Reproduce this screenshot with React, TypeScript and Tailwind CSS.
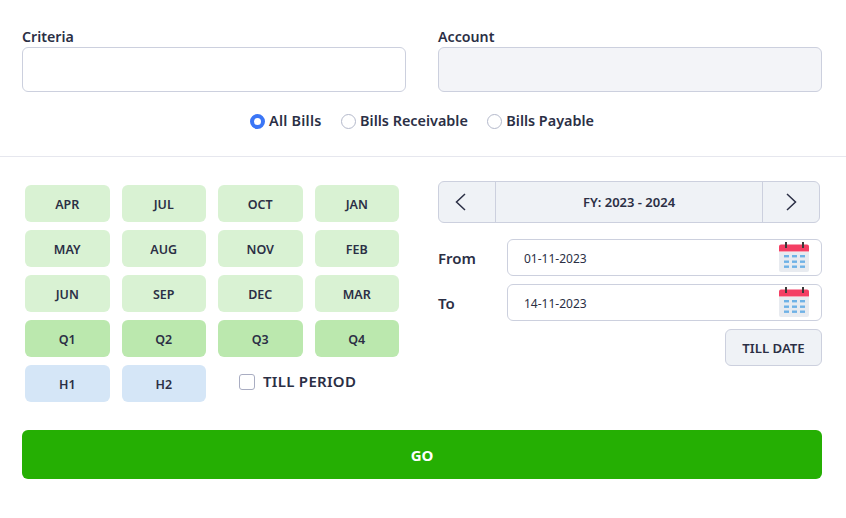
const font = { fontFamily: '"Noto Sans", "Open Sans", sans-serif' };

function Cal() {
  return (
    <svg width="30" height="31" viewBox="0 0 30 31" className="shrink-0">
      <path d="M0 8h30v20a2 2 0 0 1-2 2H2a2 2 0 0 1-2-2z" fill="#e8ebf0" />
      <path d="M0 4.5a2 2 0 0 1 2-2h26a2 2 0 0 1 2 2V9H0z" fill="#f43f64" />
      <rect x="0" y="9" width="30" height="1" fill="#f9a3b3" />
      <rect x="6" y="0" width="2" height="6" fill="#3a3a3a" />
      <rect x="23" y="0" width="2" height="6" fill="#3a3a3a" />
      {[13, 18.5, 23.5].map((y) =>
        [5, 13, 21].map((x) => <rect key={`${x}-${y}`} x={x} y={y} width="5" height="2.4" fill="#6fb2e6" />)
      )}
    </svg>
  );
}

function Radio({ label, on, w }: { label: string; on?: boolean; w: string }) {
  return (
    <label className="flex items-center gap-[4px]">
      {on ? (
        <span className="w-[15px] h-[15px] rounded-full border-[4px] border-[#3b76f6] bg-white" />
      ) : (
        <span className="w-[15px] h-[15px] rounded-full border border-[#b4b9cb] bg-white" />
      )}
      <span className={`${w} whitespace-nowrap text-[14.4px] font-semibold leading-[20px] text-[#2b2f45]`}>{label}</span>
    </label>
  );
}

function Cell({ t, c }: { t: string; c: string }) {
  return (
    <div className={`h-[37px] pt-[3px] rounded-[6px] flex items-center justify-center text-[12.5px] font-semibold text-[#2b2f45] ${c}`}>
      {t}
    </div>
  );
}

const L = 'bg-[#d9f2d3]';
const Q = 'bg-[#bbe8ae]';
const H = 'bg-[#d5e6f7]';

function DateRow({ label, value }: { label: string; value: string }) {
  return (
    <div className="flex items-center">
      <div className="w-[69px] pt-[1px] text-[15px] font-semibold text-[#2b2f45]">{label}</div>
      <div className="flex-1 h-[37px] border border-[#ccd0de] rounded-[6px] flex items-center justify-between pl-[16px] pr-[12px] bg-white">
        <span className="text-[12px] pt-[3px] text-[#2b2f45]">{value}</span>
        <Cal />
      </div>
    </div>
  );
}

export default function App() {
  return (
    <div style={font} className="w-[846px] h-[518px] bg-white overflow-hidden">
      <div className="flex gap-[32px] pl-[22px] pr-[24px] pt-[26px]">
        <div className="flex-1">
          <div className="text-[14.2px] font-semibold leading-[21px] text-[#2b2f45]">Criteria</div>
          <div className="h-[45px] border border-[#ccd0de] rounded-[6px] bg-white" />
        </div>
        <div className="flex-1">
          <div className="text-[14.2px] font-semibold leading-[21px] text-[#2b2f45]">Account</div>
          <div className="h-[45px] border border-[#ccd0de] rounded-[6px] bg-[#f3f4f8]" />
        </div>
      </div>
      <div className="flex gap-[19.5px] pl-[250px] mt-[19px]">
        <Radio label="All Bills" on w="tracking-[0.25px]" />
        <Radio label="Bills Receivable" w="tracking-normal" />
        <Radio label="Bills Payable" w="tracking-normal" />
      </div>
      <div className="h-px bg-[#e6e7ee] mt-[25px]" />
      <div className="flex pl-[22px] pr-[24px] pt-[24px]">
        <div className="w-[416px] pl-[3px] pr-[39px] pt-[4px]">
          <div className="grid grid-cols-4 gap-x-[12px] gap-y-[8px]">
            {['APR', 'JUL', 'OCT', 'JAN', 'MAY', 'AUG', 'NOV', 'FEB', 'JUN', 'SEP', 'DEC', 'MAR'].map((m) => (
              <Cell key={m} t={m} c={L} />
            ))}
            {['Q1', 'Q2', 'Q3', 'Q4'].map((m) => (
              <Cell key={m} t={m} c={Q} />
            ))}
            <Cell t="H1" c={H} />
            <Cell t="H2" c={H} />
            <label className="col-span-2 flex items-center gap-[8px] pl-[21px] pb-[4px]">
              <span className="w-[16px] h-[16px] rounded-[3px] border border-[#a9adc2] bg-white" />
              <span className="text-[15px] font-semibold tracking-[0.3px] text-[#2b2f45]">TILL PERIOD</span>
            </label>
          </div>
        </div>
        <div className="w-[384px]">
          <div className="flex h-[42px] w-[382px] border border-[#ccd0de] rounded-[6px] bg-[#eff2f6] text-[#2b2f45]">
            <div className="w-[57px] pr-[15px] flex items-center justify-center border-r border-[#ccd0de]">
              <svg width="12" height="20" viewBox="0 0 12 20" fill="none" stroke="currentColor" strokeWidth="1.5"><path d="M11 2 2.5 10 11 18" /></svg>
            </div>
            <div className="flex-1 pt-[2px] flex items-center justify-center text-[13px] font-semibold">FY: 2023 - 2024</div>
            <div className="w-[57px] pl-[1px] flex items-center justify-center border-l border-[#ccd0de]">
              <svg width="12" height="20" viewBox="0 0 12 20" fill="none" stroke="currentColor" strokeWidth="1.5"><path d="M1 2 9.5 10 1 18" /></svg>
            </div>
          </div>
          <div className="mt-[16px] flex flex-col gap-[8px]">
            <DateRow label="From" value="01-11-2023" />
            <DateRow label="To" value="14-11-2023" />
          </div>
          <div className="flex justify-end mt-[8px]">
            <div className="w-[97px] h-[37px] pt-[2px] border border-[#ccd0de] rounded-[6px] bg-[#eff2f6] flex items-center justify-center text-[13.2px] font-semibold text-[#2b2f45]">
              TILL DATE
            </div>
          </div>
        </div>
      </div>
      <div className="pl-[22px] pr-[24px] mt-[28px]">
        <div className="h-[49px] pt-[2px] rounded-[6px] bg-[#25af03] flex items-center justify-center text-[15px] font-bold text-white">GO</div>
      </div>
    </div>
  );
}
